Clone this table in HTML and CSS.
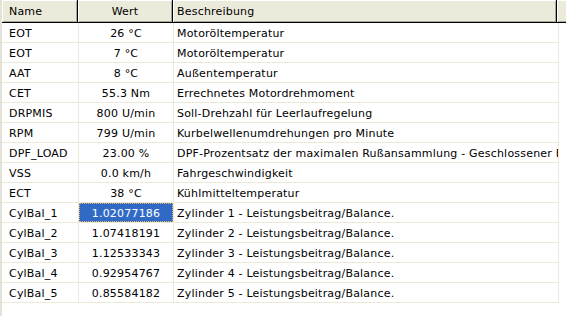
FILE: index.html
```html
<!DOCTYPE html>
<html>
<head>
<meta charset="utf-8">
<link rel="stylesheet" href="styles.css">
</head>
<body>
<div class="frame">
  <div class="list">
    <div class="header">
      <div class="hcell h-name">Name</div>
      <div class="hcell h-wert">Wert</div>
      <div class="hcell h-desc">Beschreibung</div>
      <div class="hcell h-fill"></div>
    </div>
    <div class="rows">
      <div class="row"><div class="c c-name">EOT</div><div class="c c-wert">26 °C</div><div class="c c-desc">Motoröltemperatur</div></div>
      <div class="row"><div class="c c-name">EOT</div><div class="c c-wert">7 °C</div><div class="c c-desc">Motoröltemperatur</div></div>
      <div class="row"><div class="c c-name">AAT</div><div class="c c-wert">8 °C</div><div class="c c-desc">Außentemperatur</div></div>
      <div class="row"><div class="c c-name">CET</div><div class="c c-wert">55.3 Nm</div><div class="c c-desc">Errechnetes Motordrehmoment</div></div>
      <div class="row"><div class="c c-name">DRPMIS</div><div class="c c-wert">800 U/min</div><div class="c c-desc">Soll-Drehzahl für Leerlaufregelung</div></div>
      <div class="row"><div class="c c-name">RPM</div><div class="c c-wert">799 U/min</div><div class="c c-desc">Kurbelwellenumdrehungen pro Minute</div></div>
      <div class="row"><div class="c c-name">DPF_LOAD</div><div class="c c-wert">23.00 %</div><div class="c c-desc">DPF-Prozentsatz der maximalen Rußansammlung - Geschlossener Filter</div></div>
      <div class="row"><div class="c c-name">VSS</div><div class="c c-wert">0.0 km/h</div><div class="c c-desc">Fahrgeschwindigkeit</div></div>
      <div class="row"><div class="c c-name">ECT</div><div class="c c-wert">38 °C</div><div class="c c-desc">Kühlmitteltemperatur</div></div>
      <div class="row"><div class="c c-name">CylBal_1</div><div class="c c-wert"><span class="sel">1.02077186</span></div><div class="c c-desc">Zylinder 1 - Leistungsbeitrag/Balance.</div></div>
      <div class="row"><div class="c c-name">CylBal_2</div><div class="c c-wert">1.07418191</div><div class="c c-desc">Zylinder 2 - Leistungsbeitrag/Balance.</div></div>
      <div class="row"><div class="c c-name">CylBal_3</div><div class="c c-wert">1.12533343</div><div class="c c-desc">Zylinder 3 - Leistungsbeitrag/Balance.</div></div>
      <div class="row"><div class="c c-name">CylBal_4</div><div class="c c-wert">0.92954767</div><div class="c c-desc">Zylinder 4 - Leistungsbeitrag/Balance.</div></div>
      <div class="row"><div class="c c-name">CylBal_5</div><div class="c c-wert">0.85584182</div><div class="c c-desc">Zylinder 5 - Leistungsbeitrag/Balance.</div></div>
    </div>
  </div>
</div>
</body>
</html>
```

FILE: styles.css
```css
html, body {
  margin: 0;
  padding: 0;
  background: #ffffff;
}
body {
  width: 566px;
  height: 316px;
  overflow: hidden;
  font-family: "DejaVu Sans", Verdana, sans-serif;
  font-size: 11px;
  letter-spacing: 0.2px;
  color: #000000;
}
.frame {
  display: flex;
  height: 316px;
  border-left: 2px solid #e4e2d6;
  box-sizing: border-box;
}
.list {
  flex: 1;
  display: flex;
  flex-direction: column;
  min-width: 0;
}
.header {
  display: flex;
  height: 23px;
}
.hcell {
  box-sizing: border-box;
  height: 23px;
  background: #ebeadb;
  border-right: 1px solid #000000;
  border-bottom: 1px solid #000000;
  box-shadow: inset 1px 1px 0 #ffffff, inset -1px -1px 0 #aca899;
  line-height: 19px;
  padding-top: 2px;
  white-space: nowrap;
  overflow: hidden;
}
.h-name { width: 76px; padding-left: 7px; }
.h-wert { width: 95px; text-align: center; }
.h-desc { width: 384px; padding-left: 4px; }
.h-fill { flex: 1; border-right: none; box-shadow: inset 1px 1px 0 #ffffff, inset 0 -1px 0 #aca899; }

.rows {
  display: flex;
  flex-direction: column;
}
.row {
  display: flex;
  width: 557px;
  height: 20px;
  box-sizing: border-box;
  border-bottom: 1px solid #ece9d8;
}
.c {
  box-sizing: border-box;
  height: 19px;
  line-height: 17px;
  padding-top: 2px;
  white-space: nowrap;
  overflow: hidden;
}
.c-name { width: 76px; padding-left: 7px; }
.c-wert {
  width: 95px;
  border-left: 1px solid #ece9d8;
  text-align: center;
  position: relative;
}
.c-desc {
  width: 386px;
  border-left: 1px solid #ece9d8;
  border-right: 1px solid #ece9d8;
  padding-left: 3px;
  text-overflow: clip;
}
.sel {
  position: absolute;
  left: 0;
  top: 0;
  right: 0;
  bottom: 0;
  background: #316ac5;
  color: #ffffff;
  border: 1px dotted #e8b86a;
  box-sizing: border-box;
  line-height: 17px;
  padding-top: 1px;
}
```
